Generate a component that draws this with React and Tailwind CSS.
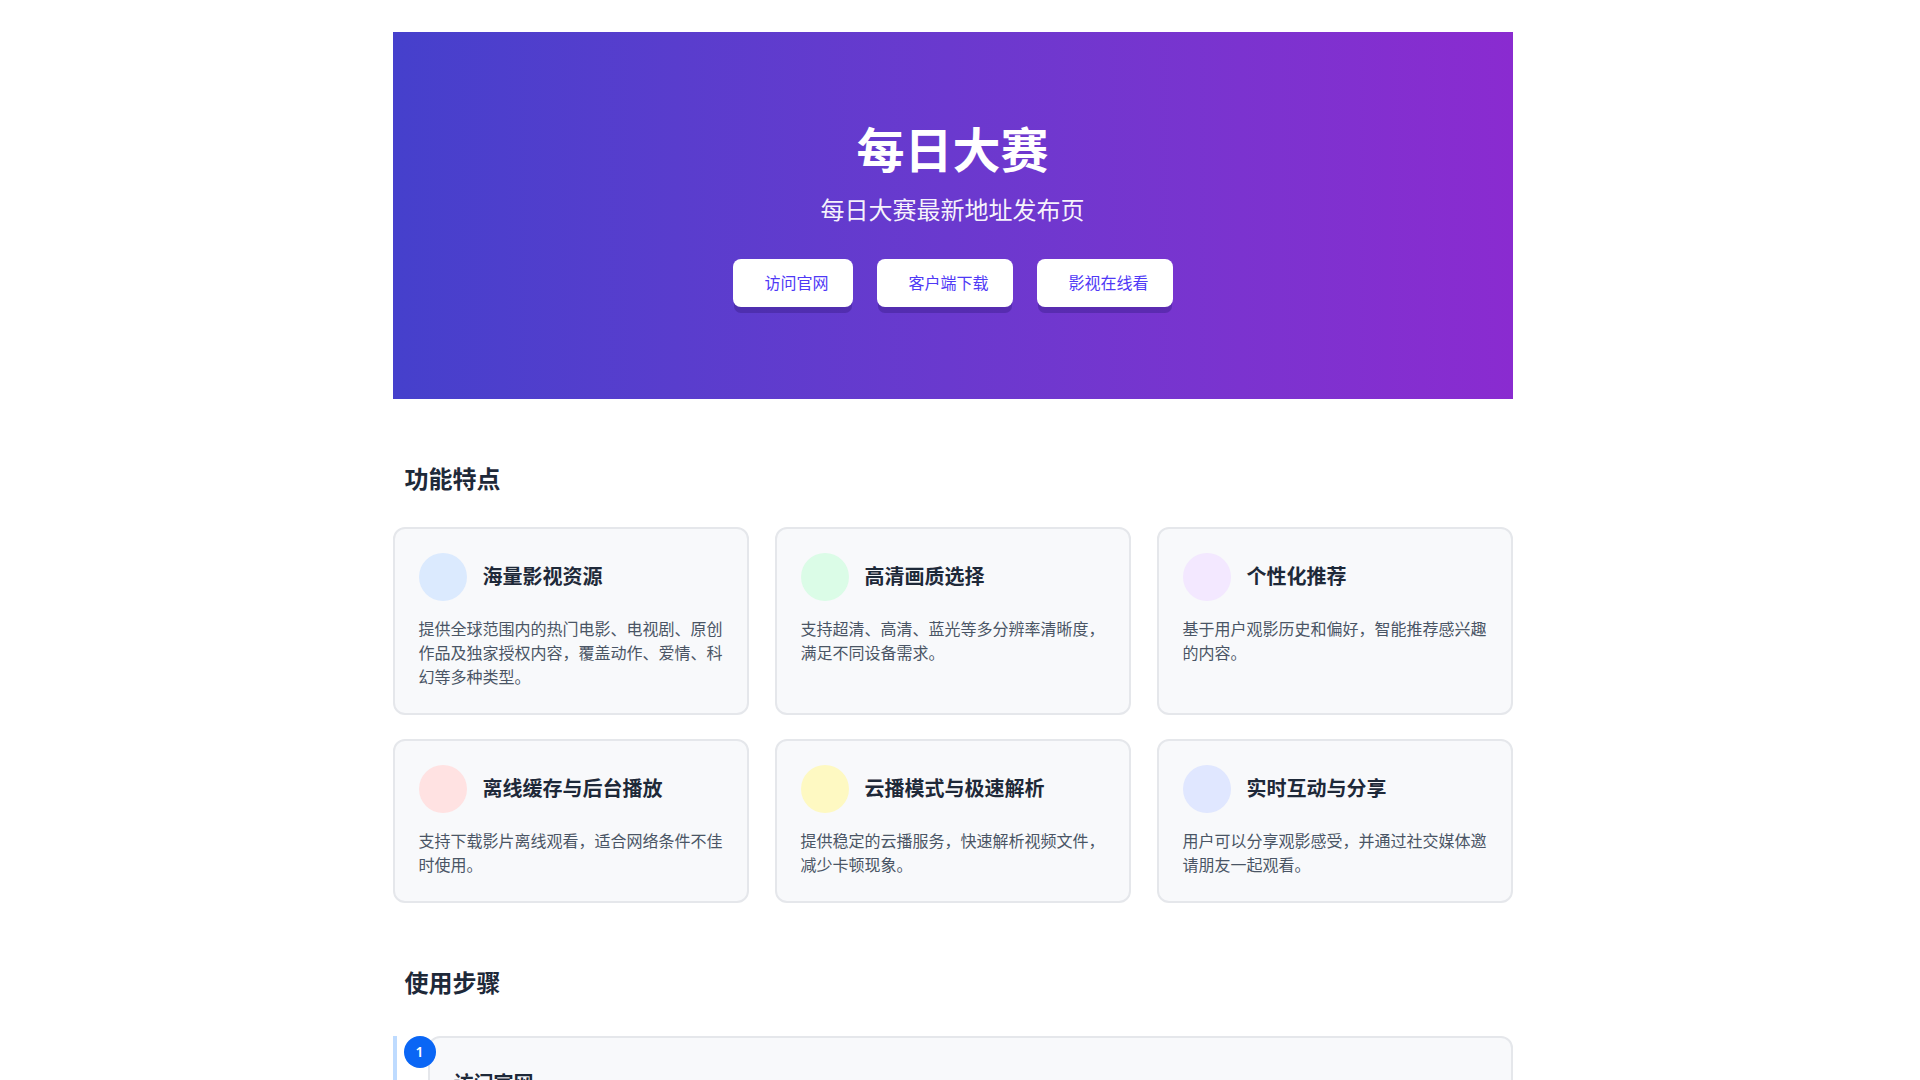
export default function App() {
  const font = { fontFamily: '"Noto Sans", "Noto Sans CJK SC", sans-serif' };
  const features = [
    ["海量影视资源", "提供全球范围内的热门电影、电视剧、原创作品及独家授权内容，覆盖动作、爱情、科幻等多种类型。", "bg-blue-100"],
    ["高清画质选择", "支持超清、高清、蓝光等多分辨率清晰度，满足不同设备需求。", "bg-green-100"],
    ["个性化推荐", "基于用户观影历史和偏好，智能推荐感兴趣的内容。", "bg-purple-100"],
    ["离线缓存与后台播放", "支持下载影片离线观看，适合网络条件不佳时使用。", "bg-red-100"],
    ["云播模式与极速解析", "提供稳定的云播服务，快速解析视频文件，减少卡顿现象。", "bg-yellow-100"],
    ["实时互动与分享", "用户可以分享观影感受，并通过社交媒体邀请朋友一起观看。", "bg-indigo-100"],
  ];
  return (
    <div className="min-h-screen bg-white text-gray-800 pr-[15px]" style={font}>
      <div className="mx-auto w-[1120px] pt-8 pb-16">
        <header className="h-[367px] bg-gradient-to-r from-[#4540cc] to-[#8a2bd0] flex flex-col items-center pt-[94px]">
          <h1 className="text-5xl font-bold text-white leading-none">每日大赛</h1>
          <p className="mt-5 text-2xl text-white/95">每日大赛最新地址发布页</p>
          <div className="mt-[33px] flex gap-6">
            {[["访问官网", "w-[120px]"], ["客户端下载", "w-[136px]"], ["影视在线看", "w-[136px]"]].map(([t, w]) => (
              <button key={t} className={`${w} h-12 bg-white rounded-lg text-base text-indigo-600 pl-2 shadow-[0_7px_0_-1px_rgba(60,30,140,0.45)]`}>{t}</button>
            ))}
          </div>
        </header>

        <h2 className="mt-[64px] pl-3 text-2xl font-bold text-gray-800">功能特点</h2>
        <div className="mt-[32px] grid grid-cols-3 gap-x-[26px] gap-y-6">
          {features.map(([t, d, c]) => (
            <div key={t} className="rounded-xl border-2 border-gray-200 bg-[#f8f9fb] px-6 pt-6 pb-6">
              <div className="flex items-center gap-4">
                <div className={`w-12 h-12 rounded-full ${c}`}></div>
                <h3 className="text-xl font-bold text-gray-800">{t}</h3>
              </div>
              <p className="mt-4 text-base leading-6 text-gray-600">{d}</p>
            </div>
          ))}
        </div>

        <h2 className="mt-[64px] pl-3 text-2xl font-bold text-gray-800">使用步骤</h2>
        <div className="mt-[37px] relative border-l-4 border-blue-200 pl-[31px]">
          <div className="absolute left-[7px] top-0 w-8 h-8 rounded-full bg-[#0a66f5] text-white text-sm font-semibold flex items-center justify-center">1</div>
          <div className="rounded-xl border-2 border-gray-200 bg-[#f8f9fb] px-6 pt-6 pb-6">
            <h3 className="mt-2 text-xl font-semibold text-gray-800">访问官网</h3>
            <p className="mt-3 text-base text-gray-600">打开浏览器，访问每日大赛官方网站。</p>
          </div>
        </div>
      </div>
    </div>
  );
}
